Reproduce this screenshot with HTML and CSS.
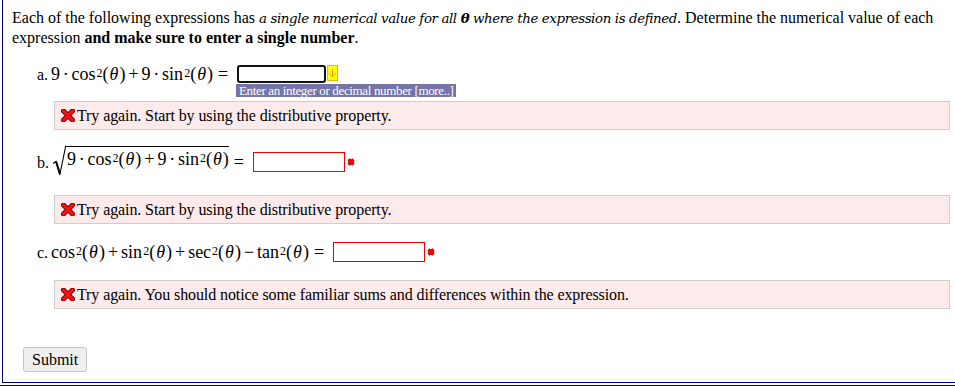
FILE: index.html
```html
<!DOCTYPE html>
<html>
<head>
<meta charset="utf-8">
<link rel="stylesheet" href="styles.css">
</head>
<body>
<div class="frame">
  <p class="intro">Each of the following expressions has <i>a single numerical value for all <b>θ</b> where the expression is defined</i>. Determine the numerical value of each expression <b>and make sure to enter a single number</b>.</p>

  <div class="part part-a">
    <div class="row">
      <span class="label">a.</span>
      <span class="math">9<span class="op dot">·</span>cos<sup>2</sup><span class="arg">(<i>θ</i>)</span><span class="op">+</span>9<span class="op dot">·</span>sin<sup>2</sup><span class="arg">(<i>θ</i>)</span><span class="rel">=</span></span>
      <span class="input focused"></span>
      <span class="hint-btn"><svg width="9" height="9" viewBox="0 0 9 9"><path d="M4.5 0.5 V7.5 M1 4.5 L4.5 8 L8 4.5" fill="none" stroke="#f39c00" stroke-width="1"/></svg></span>
    </div>
    <div class="tip-row"><span class="tip">Enter an integer or decimal number [more..]</span></div>
    <div class="feedback"><svg class="bigx" width="14" height="13" viewBox="0 0 14 13"><path d="M2.5 2 L11.5 11 M11.5 2 L2.5 11" stroke="#7a0000" stroke-width="5" stroke-linecap="round"/><path d="M2.5 2 L11.5 11 M11.5 2 L2.5 11" stroke="#ff1010" stroke-width="3" stroke-linecap="round"/></svg>Try again. Start by using the distributive property.</div>
  </div>

  <div class="part part-b">
    <div class="row">
      <span class="label">b.</span>
      <span class="math"><span class="sqrt"><svg class="radical" width="14" height="31" viewBox="0 0 14 31"><path d="M1 18.5 L4 16.5 L7.8 30 L13.8 0.6" fill="none" stroke="#000" stroke-width="1.1"/><path d="M4 16.5 L8 28.5" stroke="#000" stroke-width="2"/></svg><span class="radicand">9<span class="op dot">·</span>cos<sup>2</sup><span class="arg">(<i>θ</i>)</span><span class="op">+</span>9<span class="op dot">·</span>sin<sup>2</sup><span class="arg">(<i>θ</i>)</span></span></span><span class="rel">=</span></span>
      <span class="input wrong"></span>
      <svg class="smallx" width="8" height="8" viewBox="0 0 8 8"><path d="M1.5 1.5 L6.5 6.5 M6.5 1.5 L1.5 6.5" stroke="#9a0000" stroke-width="3.2"/><path d="M1.5 1.5 L6.5 6.5 M6.5 1.5 L1.5 6.5" stroke="#ff0000" stroke-width="2"/></svg>
    </div>
    <div class="feedback"><svg class="bigx" width="14" height="13" viewBox="0 0 14 13"><path d="M2.5 2 L11.5 11 M11.5 2 L2.5 11" stroke="#7a0000" stroke-width="5" stroke-linecap="round"/><path d="M2.5 2 L11.5 11 M11.5 2 L2.5 11" stroke="#ff1010" stroke-width="3" stroke-linecap="round"/></svg>Try again. Start by using the distributive property.</div>
  </div>

  <div class="part part-c">
    <div class="row">
      <span class="label">c.</span>
      <span class="math">cos<sup>2</sup><span class="arg">(<i>θ</i>)</span><span class="op">+</span>sin<sup>2</sup><span class="arg">(<i>θ</i>)</span><span class="op">+</span>sec<sup>2</sup><span class="arg">(<i>θ</i>)</span><span class="op">−</span>tan<sup>2</sup><span class="arg">(<i>θ</i>)</span><span class="rel">=</span></span>
      <span class="input wrong"></span>
      <svg class="smallx" width="8" height="8" viewBox="0 0 8 8"><path d="M1.5 1.5 L6.5 6.5 M6.5 1.5 L1.5 6.5" stroke="#9a0000" stroke-width="3.2"/><path d="M1.5 1.5 L6.5 6.5 M6.5 1.5 L1.5 6.5" stroke="#ff0000" stroke-width="2"/></svg>
    </div>
    <div class="feedback"><svg class="bigx" width="14" height="13" viewBox="0 0 14 13"><path d="M2.5 2 L11.5 11 M11.5 2 L2.5 11" stroke="#7a0000" stroke-width="5" stroke-linecap="round"/><path d="M2.5 2 L11.5 11 M11.5 2 L2.5 11" stroke="#ff1010" stroke-width="3" stroke-linecap="round"/></svg>Try again. You should notice some familiar sums and differences within the expression.</div>
  </div>

  <div class="actions"><button class="submit" type="button">Submit</button></div>
</div>
<div class="rule"></div>
</body>
</html>
```

FILE: styles.css
```css
html, body {
  margin: 0;
  padding: 0;
  background: #fff;
}
body {
  font-family: "Liberation Serif", "Times New Roman", serif;
  font-size: 16px;
  line-height: 19px;
  color: #000;
}
.frame {
  margin-left: 2px;
  width: 948px;
  border-left: 1px solid #00007a;
  border-right: 1px solid #00007a;
  border-bottom: 1px solid #00007a;
  padding: 8px 0 10px 9px;
}
.intro {
  margin: 0;
  padding-right: 8px;
}
.intro i {
  font-family: "DejaVu Serif", serif;
  font-size: 13.4px;
  letter-spacing: -0.4px;
}
.part {
  padding-left: 25px;
}
.row {
  display: flex;
  align-items: center;
  height: 20px;
}
.label {
  margin-right: 3px;
}
.math {
  display: inline-flex;
  align-items: center;
  white-space: nowrap;
  font-family: "Liberation Serif", "Times New Roman", serif;
  font-size: 18px;
}
.math sup {
  font-size: 12px;
  line-height: 0;
  position: relative;
  top: -1px;
  vertical-align: super;
  margin-left: 1px;
}
.math i {
  font-family: "Liberation Serif", serif;
  font-style: italic;
  padding: 0 1px 0 1px;
}
.op {
  padding: 0 3px;
}
.op.dot {
  padding: 0 2.75px;
}
.rel {
  padding: 0 4px 0 5px;
}
.sqrt {
  display: inline-flex;
  align-items: flex-start;
  height: 28px;
}
.radical {
  display: block;
  margin-top: -3px;
}
.radicand {
  display: inline-flex;
  align-items: center;
  border-top: 1.2px solid #000;
  padding: 1px 0 0 1px;
  height: 22px;
  margin-top: -2px;
}
.input {
  display: inline-block;
  width: 89px;
  height: 18px;
  background: #fff;
  box-sizing: border-box;
  margin-left: 5px;
}
.input.focused {
  border: 2px solid #111;
  border-radius: 3px;
}
.input.wrong {
  border: 1px solid #ee0000;
  width: 92px;
  height: 20px;
}
.hint-btn {
  display: inline-flex;
  align-items: center;
  justify-content: center;
  width: 11px;
  height: 16px;
  box-sizing: border-box;
  background: #ffff00;
  border: 1px solid #f3b300;
  margin-left: 1px;
  align-self: flex-start;
  margin-top: 1px;
}
.smallx {
  margin-left: 2px;
}
.tip-row {
  display: flex;
  padding-left: 199px;
  height: 13px;
  margin-top: 0;
}
.tip {
  display: block;
  background: #7474a6;
  color: #fff;
  font-size: 13px;
  line-height: 13px;
  letter-spacing: -0.35px;
  padding: 0 2px 0 3px;
  white-space: nowrap;
}
.feedback {
  margin-left: 17px;
  margin-right: 10px;
  height: 29px;
  box-sizing: border-box;
  background: #fdebeb;
  border: 1px solid #cdcdcd;
  display: flex;
  align-items: center;
  padding-left: 6px;
  letter-spacing: -0.1px;
}
.bigx {
  margin-right: 2px;
  flex: none;
}
.part-a { margin-top: 17px; }
.part-a .feedback { margin-top: 4px; }
.part-b { margin-top: 22px; }
.part-b .feedback { margin-top: 23px; }
.part-c { margin-top: 18px; }
.part-c .feedback { margin-top: 18px; }
.actions {
  margin-top: 38px;
  padding-left: 11px;
}
.submit {
  font-family: "Liberation Serif", "Times New Roman", serif;
  font-size: 16px;
  height: 25px;
  box-sizing: border-box;
  padding: 0 8px;
  background: #efefef;
  border: 1px solid #c4c4c4;
  border-radius: 3px;
  color: #000;
  display: block;
}
.rule {
  margin-top: 2px;
  height: 1px;
  background: #00007a;
}
```
